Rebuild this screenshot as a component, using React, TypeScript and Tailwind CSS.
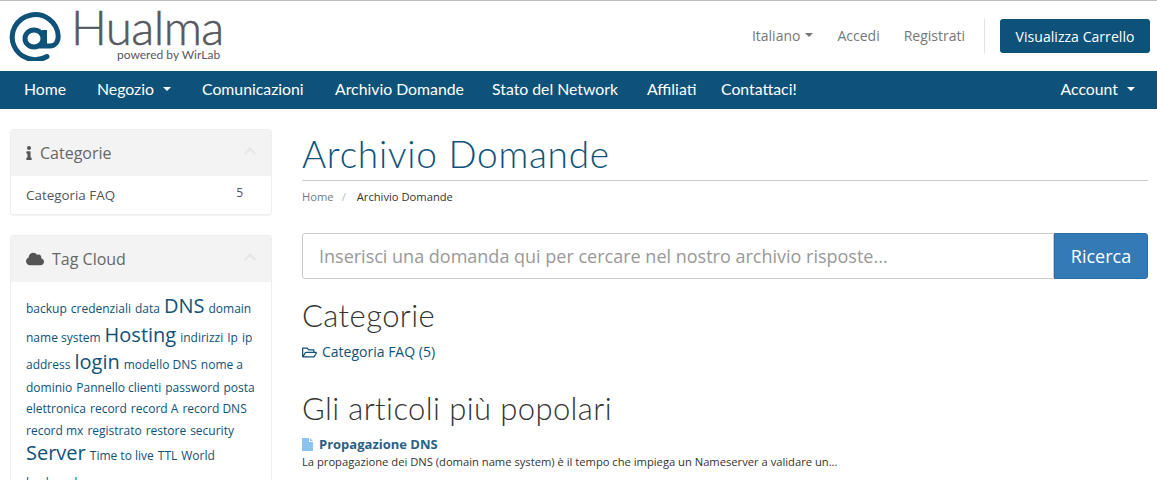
import React from "react";
import { FaChevronUp, FaCloud, FaInfo, FaRegFolderOpen } from "react-icons/fa";

const os = "font-['Open_Sans',sans-serif]";
const ral = "font-['Lato',sans-serif]";

function Caret({ className = "" }: { className?: string }) {
  return <span className={`inline-block w-0 h-0 border-x-[4px] border-x-transparent border-t-[4px] ${className}`} />;
}

function Logo() {
  return (
    <div className="relative w-[215px] h-[62px]">
      <svg width="54" height="50" viewBox="0 0 54 50" className="block mt-[6px] -ml-[2px]">
        <path d="M39 45.5 A23 22.5 0 1 1 50.2 25 C50.2 31 47 35 42 35 H32" fill="none" stroke="#0e527a" strokeWidth="5" strokeLinecap="round" />
        <ellipse cx="26" cy="27.5" rx="9" ry="8.5" fill="none" stroke="#0e527a" strokeWidth="5" />
        <path d="M36.5 19 V36" fill="none" stroke="#0e527a" strokeWidth="5" />
      </svg>
      <span className="absolute left-[61px] top-[4px] text-[47.5px] leading-[36px] tracking-[-0.6px] font-light text-[#55595f] [-webkit-text-stroke:0.5px_#55595f] font-['Lato',sans-serif] whitespace-nowrap">Hualma</span>
      <span className="absolute left-[107px] top-[44px] text-[12px] leading-[12px] text-[#55595f] font-['Lato',sans-serif] whitespace-nowrap">powered by WirLab</span>
    </div>
  );
}

function SideHead({ icon, title }: { icon: React.ReactNode; title: string }) {
  return (
    <div className="h-[46px] bg-[#f3f3f3] rounded-t-[3px] flex items-center pl-[15px] pr-[13px] text-[#666] text-[16px] pb-[1px]">
      {icon}
      <span className="flex-1">{title}</span>
      <FaChevronUp size={14} className="text-[#e6e6e6] mb-[4px] mr-[1px]" />
    </div>
  );
}

const tagLines: [string, string][][] = [
  [["backup", "s"], ["credenziali", "s"], ["data", "s"], ["DNS", "l"], ["domain", "s"]],
  [["name system", "s"], ["Hosting", "l"], ["indirizzi", "s"], ["Ip", "s"], ["ip", "s"]],
  [["address", "s"], ["login", "l"], ["modello DNS", "s"], ["nome a", "s"]],
  [["dominio", "s"], ["Pannello clienti", "s"], ["password", "s"], ["posta", "s"]],
  [["elettronica", "s"], ["record", "s"], ["record A", "s"], ["record DNS", "s"]],
  [["record mx", "s"], ["registrato", "s"], ["restore", "s"], ["security", "s"]],
  [["Server", "l"], ["Time to live", "s"], ["TTL", "s"], ["World", "s"]],
  [["backup day", "s"]],
];
const lineHeights = ["h-[29px]", "h-[27px]", "h-[26px]", "h-[21px]", "h-[22px]", "h-[22px]", "h-[30px]", "h-[21px]"];

export default function App() {
  return (
    <div className={`w-[1157px] h-[480px] overflow-hidden bg-white ${os}`}>
      <div className="h-px bg-[#bbb]" />
      <header className="h-[70px] flex items-center pl-[10px] pr-[7px]">
        <Logo />
        <div className="ml-auto flex items-center text-[14px] text-[#777]">
          <span className="flex items-center gap-[5px] -mt-[2px]">Italiano <Caret className="border-t-[#777]" /></span>
          <span className="ml-[24px] -mt-[2px]">Accedi</span>
          <span className="ml-[24px] -mt-[2px]">Registrati</span>
          <div className="ml-[19px] w-px h-[34px] bg-[#e2e2e2]" />
          <div className={`ml-[15px] w-[150px] h-[34px] rounded-[3px] bg-[#0e527a] text-white flex items-center justify-center text-[14px] tracking-[0.05px] ${os}`}>Visualizza Carrello</div>
        </div>
      </header>
      <nav className={`h-[38px] bg-[#0e527a] text-white flex items-center text-[15.8px] pl-[24px] pr-[22px] pb-[2px] ${ral}`}>
        <span className="w-[73px]">Home</span>
        <span className="w-[105px] flex items-center">Negozio<Caret className="ml-[9px] border-t-white" /></span>
        <span className="w-[133px]">Comunicazioni</span>
        <span className="w-[157px]">Archivio Domande</span>
        <span className="w-[155px]">Stato del Network</span>
        <span className="w-[74px]">Affiliati</span>
        <span>Contattaci!</span>
        <span className="ml-auto flex items-center">Account<Caret className="ml-[9px] border-t-white" /></span>
      </nav>
      <div className="flex pl-[10px] pr-[9px] pt-[20px]">
        <aside className="w-[262px] shrink-0">
          <section className="h-[86px] rounded-[3px] border border-[#eee] shadow-[0_1px_1px_rgba(0,0,0,0.05)] overflow-hidden">
            <SideHead icon={<FaInfo size={14} className="text-[#555] mr-[4px] -ml-[4px]" />} title="Categorie" />
            <div className="flex justify-between pl-[15px] pr-[28px] pt-[9px] text-[13.4px] text-[#555]">
              <span>Categoria FAQ</span>
              <span className="text-[12px] text-[#5b4a74] -mt-[1px]">5</span>
            </div>
          </section>
          <section className="mt-[20px] rounded-t-[3px] border-x border-t border-[#eee] h-[260px] overflow-hidden">
            <SideHead icon={<FaCloud size={18} className="text-[#555] mr-[8px]" />} title="Tag Cloud" />
            <div className="pl-[15px] pt-[10px] text-[#0e527a]">
              {tagLines.map((line, i) => (
                <div key={i} className={`flex items-baseline gap-[4px] whitespace-nowrap ${lineHeights[i]}`}>
                  {line.map(([t, size]) => (
                    <span key={t} className={size === "l" ? "text-[20px] leading-[28px]" : "text-[12px] leading-[28px]"}>{t}</span>
                  ))}
                </div>
              ))}
            </div>
          </section>
        </aside>
        <main className="ml-[30px] flex-1 min-w-0">
          <div className="border-b border-[#ccc] h-[52px]">
            <h1 className={`text-[37px] leading-[50px] font-light text-[#0e527a] tracking-[0.75px] whitespace-nowrap ${ral}`}>Archivio Domande</h1>
          </div>
          <div className="mt-[8px] text-[11.2px] leading-[16px] flex">
            <span className="text-[#777]">Home</span>
            <span className="text-[#bbb] ml-[8px]">/</span>
            <span className="text-[#333] ml-[11px]">Archivio Domande</span>
          </div>
          <div className="mt-[28px] flex h-[46px]">
            <div className="flex-1 border border-[#ccc] rounded-l-[3px] flex items-center pl-[16px] text-[18px] text-[#999]">Inserisci una domanda qui per cercare nel nostro archivio risposte...</div>
            <div className="w-[94px] bg-[#337ab7] border border-[#2e6da4] rounded-r-[3px] text-white text-[18px] flex items-center justify-center">Ricerca</div>
          </div>
          <h2 className={`mt-[16px] text-[31px] leading-[40px] font-light text-[#333] tracking-[0.4px] ${ral}`}>Categorie</h2>
          <div className="mt-[7px] flex items-center text-[14px] leading-[20px] text-[#0e527a]">
            <FaRegFolderOpen size={15} className="mr-[5px]" />Categoria FAQ (5)
          </div>
          <h2 className={`mt-[26px] text-[31px] leading-[40px] font-light text-[#333] tracking-[0.4px] ${ral}`}>Gli articoli più popolari</h2>
          <div className="mt-[7px] flex items-center text-[13px] leading-[18px] font-bold text-[#2a5f86]">
            <svg width="11" height="13" viewBox="0 0 11 13" className="mr-[6px]"><path d="M0 0H7V4H11V13H0Z M8 0L11 3H8Z" fill="#8cc4ef" /></svg>
            Propagazione DNS
          </div>
          <p className="mt-[2px] text-[11.2px] leading-[14px] text-[#333] whitespace-nowrap">La propagazione dei DNS (domain name system) è il tempo che impiega un Nameserver a validare un...</p>
        </main>
      </div>
    </div>
  );
}
